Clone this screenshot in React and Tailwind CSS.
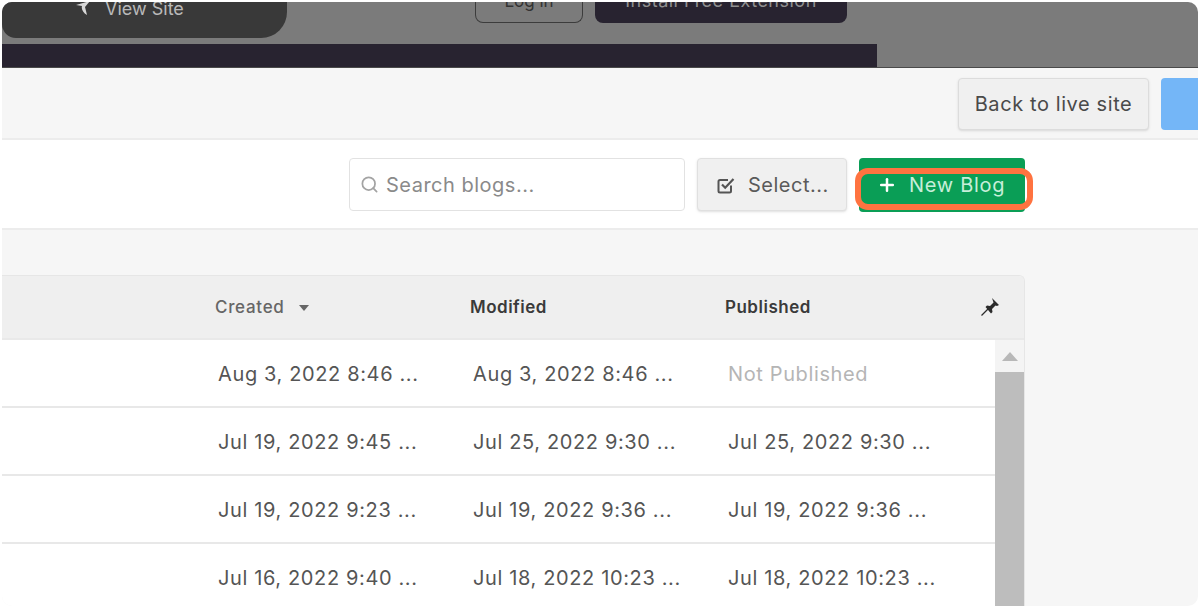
import React from "react";
import { Search, Plus } from "lucide-react";

const rows = [
  ["Aug 3, 2022 8:46 ...", "Aug 3, 2022 8:46 ...", "Not Published"],
  ["Jul 19, 2022 9:45 ...", "Jul 25, 2022 9:30 ...", "Jul 25, 2022 9:30 ..."],
  ["Jul 19, 2022 9:23 ...", "Jul 19, 2022 9:36 ...", "Jul 19, 2022 9:36 ..."],
  ["Jul 16, 2022 9:40 ...", "Jul 18, 2022 10:23 ...", "Jul 18, 2022 10:23 ..."],
];

export default function App() {
  return (
    <div className="h-[608px] w-[1200px] overflow-hidden bg-white p-[2px] font-['Inter',sans-serif]">
      <div className="flex h-[604px] flex-col overflow-hidden rounded-[10px] bg-[#f6f6f6]">
        {/* dimmed page behind */}
        <div className="flex h-[42px] shrink-0 items-start overflow-hidden bg-[#7b7b7b]">
          <div className="flex h-[36px] w-[285px] shrink-0 items-start overflow-hidden rounded-bl-[14px] rounded-br-[26px] bg-[#393939] pl-[73px]">
            <span className="mt-[-5px] flex items-center gap-[14px] text-[18px] leading-[24px] text-[#b9b9b9]">
              <svg width="16" height="18" viewBox="0 0 16 18" className="mt-[-2px]">
                <path d="M1 6 L15 2 L10 8 L12 16 C8 14 6 10 7 7 Z" fill="#d8d8d8" />
              </svg>
              View Site
            </span>
          </div>
          <div className="ml-[188px] flex h-[21px] w-[108px] shrink-0 items-end justify-center overflow-hidden rounded-b-lg border border-t-0 border-[#3c3c3c]">
            <span className="mb-[11px] text-[17px] leading-[20px] text-[#333333]">Log in</span>
          </div>
          <div className="ml-[12px] flex h-[21px] w-[252px] shrink-0 items-end justify-center overflow-hidden rounded-b-lg bg-[#282330]">
            <span className="mb-[12px] text-[18px] leading-[20px] tracking-[0.5px] text-[#8f8f8f]">Install Free Extension</span>
          </div>
        </div>
        <div className="flex h-[23px] shrink-0 bg-[#7b7b7b]">
          <div className="h-full w-[875px] bg-[#282330]" />
        </div>
        {/* toolbar */}
        <div className="flex h-[73px] shrink-0 items-start justify-end gap-[12px] border-b-2 border-t border-[#ececec] border-t-[#4a4a4a] pt-[10px]">
          <button className="h-[52px] w-[191px] rounded-[4px] border border-[#dcdcdc] bg-[#f0f0f0] text-[20px] tracking-[0.6px] text-[#4a4a4a] shadow-sm">
            Back to live site
          </button>
          <div className="h-[52px] w-[37px] rounded-l-[4px] bg-[#74b6f7]" />
        </div>
        {/* actions */}
        <div className="flex h-[90px] shrink-0 items-start border-b-2 border-[#ececec] bg-white pl-[347px] pt-[18px]">
          <div className="flex h-[53px] w-[336px] items-center gap-[7px] rounded-[4px] border border-[#e2e2e2] bg-white pl-[10px] text-[20px] tracking-[0.5px] text-[#8a8a8a]">
            <Search size={19} strokeWidth={2.2} className="text-[#a3a3a3]" />
            Search blogs...
          </div>
          <button className="ml-[12px] flex h-[53px] w-[150px] items-center gap-[12px] rounded-[4px] border border-[#e0e0e0] bg-[#f0f0f0] pl-[18px] text-[20px] tracking-[0.5px] text-[#5a5a5a] shadow-sm">
            <svg width="20" height="20" viewBox="0 0 20 20" fill="none" stroke="#555555" strokeWidth="2">
              <path d="M15 10.5V16a1.5 1.5 0 0 1-1.5 1.5H4A1.5 1.5 0 0 1 2.500 16V6.500A1.5 1.5 0 0 1 4 5h8" />
              <path d="M6 9.500l3.200 3.200L17.500 4" strokeWidth="2.200" />
            </svg>
            Select...
          </button>
          <div className="relative ml-[12px] h-[54px] w-[166px]">
            <button className="flex h-full w-full items-center gap-[12px] rounded-[4px] bg-[#0a9e56] pl-[18px] text-[20px] tracking-[0.7px] text-[#c6eed9]">
              <Plus size={20} strokeWidth={3} className="text-white" />
              New Blog
            </button>
            <div className="absolute left-[-4px] top-[10px] h-[42px] w-[178px] rounded-[13px] border-[6px] border-[#ff7340]" />
          </div>
        </div>
        {/* table */}
        <div className="flex-1 pt-[45px]">
          <div className="w-[1023px] overflow-hidden rounded-tr-[6px] border-r border-t border-[#e6e6e6]">
            <div className="flex h-[64px] items-center border-b-2 border-[#e9e9e9] bg-[#efefef] pl-[213px] pt-[2px] text-[17px] font-semibold tracking-[0.5px] text-[#3a3a3a]">
              <span className="flex w-[255px] items-center gap-[14px] font-medium tracking-[0.7px] text-[#666666]">
                Created
                <svg width="10" height="6" viewBox="0 0 10 6"><path d="M0 0h10L5 6z" fill="#666666" /></svg>
              </span>
              <span className="w-[255px]">Modified</span>
              <span className="w-[255px]">Published</span>
              <svg width="22" height="22" viewBox="0 0 22 22" className="ml-[-1px] mt-[-2px]">
                <path d="M13 2l7 7-2 1-1.5-.5-3.500 3.500.5 3-1.500 1.500L6.500 11 8 9.500l3 .5 3.500-3.500L14 5z" fill="#2b2b2b" />
                <path d="M9 13l-6.500 6.500" stroke="#2b2b2b" strokeWidth="1.300" />
              </svg>
            </div>
            <div className="flex">
              <div className="flex-1 bg-white">
                {rows.map((r) => (
                  <div key={r[0] + r[1]} className="flex h-[68px] items-center border-b-2 border-[#e8e8e8] pl-[216px] pt-[1px] text-[20px] tracking-[0.63px] text-[#555555]">
                    {r.map((c, i) => (
                      <span key={i} className={"w-[255px] whitespace-nowrap " + (c === "Not Published" ? "text-[#b5b5b5]" : "")}>
                        {c}
                      </span>
                    ))}
                  </div>
                ))}
              </div>
              <div className="flex w-[29px] shrink-0 flex-col items-center bg-[#f4f4f4]">
                <div className="flex h-[32px] items-center justify-center">
                  <svg width="16" height="9" viewBox="0 0 16 9"><path d="M8 0l8 9H0z" fill="#b8b8b8" /></svg>
                </div>
                <div className="w-full flex-1 bg-[#bdbdbd]" />
              </div>
            </div>
          </div>
        </div>
      </div>
    </div>
  );
}
